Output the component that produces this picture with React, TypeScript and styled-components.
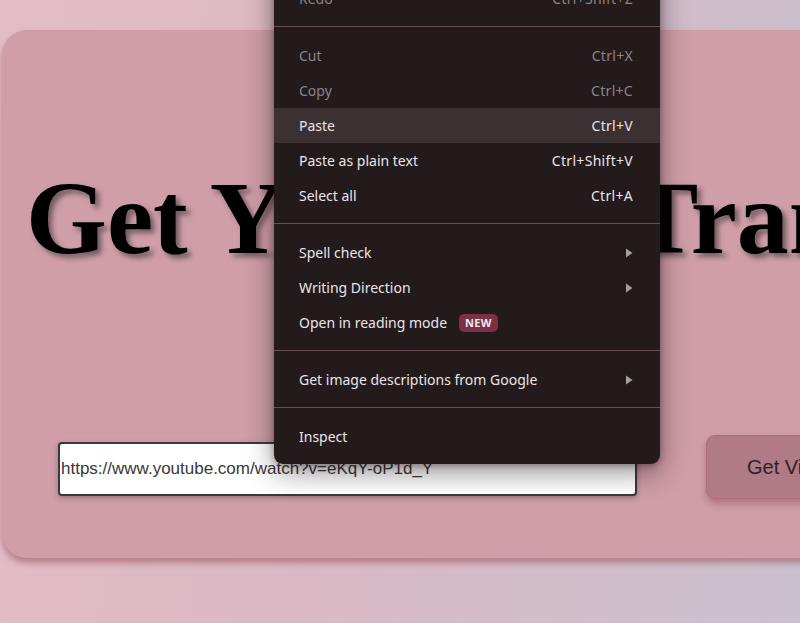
import React from 'react';
import styled, { createGlobalStyle } from 'styled-components';

const GlobalStyle = createGlobalStyle`
  html, body {
    margin: 0;
    padding: 0;
    overflow: hidden;
  }
  body {
    font-family: 'Liberation Sans', Arial, sans-serif;
  }
`;

const Page = styled.div`
  position: relative;
  width: 800px;
  height: 623px;
  overflow: hidden;
  background: linear-gradient(100deg, #e3bcc6 0%, #dab9c4 45%, #c9c1cd 100%);
  padding: 30px 0 0 2px;
  box-sizing: border-box;
`;

const Card = styled.div`
  width: 1100px;
  height: 528px;
  box-sizing: border-box;
  background: #cf9ea8;
  border-radius: 25px;
  box-shadow: 0 5px 6px rgba(165, 95, 110, 0.65);
  padding: 0 0 0 24px;
  display: flex;
  flex-direction: column;
`;

const Title = styled.h1`
  margin: 128px 0 0;
  font-family: 'Liberation Serif', 'Times New Roman', serif;
  font-weight: 700;
  font-size: 104px;
  line-height: normal;
  color: #000;
  white-space: nowrap;
  text-shadow: 4px 4px 5px rgba(40, 40, 40, 0.55);
`;

const FormRow = styled.div`
  display: flex;
  align-items: flex-start;
  gap: 69px;
  margin-top: 158px;
  padding-left: 32px;
`;

const UrlInput = styled.input`
  width: 579px;
  height: 54px;
  margin-top: 7px;
  box-sizing: border-box;
  border: 2px solid #3a3a3a;
  border-radius: 4px;
  padding: 0 0 0 1px;
  background: #fff;
  font-family: 'Liberation Sans', Arial, sans-serif;
  font-size: 17px;
  color: #383838;
  box-shadow: 0 2px 5px rgba(60, 30, 35, 0.35);
  outline: none;
`;

const SubmitButton = styled.button`
  height: 64px;
  box-sizing: border-box;
  padding: 0 40px;
  background: #b07a86;
  border: 1px solid #b8677a;
  border-radius: 9px;
  font-family: 'Liberation Sans', Arial, sans-serif;
  font-size: 20px;
  color: #2b2426;
  white-space: nowrap;
  box-shadow: 0 5px 7px rgba(110, 50, 65, 0.35);
`;

const Menu = styled.div`
  position: absolute;
  left: 274px;
  top: -62px;
  width: 386px;
  box-sizing: border-box;
  padding: 8px 0 10px;
  background: #231a1c;
  border-radius: 0 0 9px 9px;
  box-shadow: 0 8px 28px rgba(20, 5, 10, 0.45), 0 2px 6px rgba(20, 5, 10, 0.3);
  font-family: 'Noto Sans', 'Segoe UI', sans-serif;
  font-size: 14px;
`;

const Item = styled.div<{ $disabled?: boolean; $active?: boolean }>`
  display: flex;
  align-items: center;
  height: 35px;
  padding: 0 27px 0 25px;
  color: ${(p) => (p.$disabled ? '#8b8587' : '#ebe4e6')};
  background: ${(p) => (p.$active ? '#3b3133' : 'transparent')};
`;

const Label = styled.span`
  flex: 1;
  display: flex;
  align-items: center;
  gap: 12px;
`;

const Shortcut = styled.span`
  color: inherit;
  letter-spacing: 0.3px;
`;

const Separator = styled.div`
  height: 1px;
  margin: 10px 0 11px;
  background: #6b4e55;
`;

const Badge = styled.span`
  display: inline-block;
  padding: 1px 6px;
  border-radius: 5px;
  background: #7c3045;
  color: #f5e8ec;
  font-size: 11px;
  font-weight: 700;
  letter-spacing: 0.3px;
  line-height: 16px;
`;

const Arrow = () => (
  <svg width="8" height="10" viewBox="0 0 8 10">
    <path d="M1 0.5 L7.5 5 L1 9.5 Z" fill="#a59ea0" />
  </svg>
);

export default function App() {
  return (
    <>
      <GlobalStyle />
      <Page>
        <Card>
          <Title>Get YouTube Transcript</Title>
          <FormRow>
            <UrlInput defaultValue="https://www.youtube.com/watch?v=eKqY-oP1d_Y" />
            <SubmitButton>Get Video Transcript</SubmitButton>
          </FormRow>
        </Card>
        <Menu>
          <Item $disabled>
            <Label>Undo</Label>
            <Shortcut>Ctrl+Z</Shortcut>
          </Item>
          <Item $disabled>
            <Label>Redo</Label>
            <Shortcut>Ctrl+Shift+Z</Shortcut>
          </Item>
          <Separator />
          <Item $disabled>
            <Label>Cut</Label>
            <Shortcut>Ctrl+X</Shortcut>
          </Item>
          <Item $disabled>
            <Label>Copy</Label>
            <Shortcut>Ctrl+C</Shortcut>
          </Item>
          <Item $active>
            <Label>Paste</Label>
            <Shortcut>Ctrl+V</Shortcut>
          </Item>
          <Item>
            <Label>Paste as plain text</Label>
            <Shortcut>Ctrl+Shift+V</Shortcut>
          </Item>
          <Item>
            <Label>Select all</Label>
            <Shortcut>Ctrl+A</Shortcut>
          </Item>
          <Separator />
          <Item>
            <Label>Spell check</Label>
            <Arrow />
          </Item>
          <Item>
            <Label>Writing Direction</Label>
            <Arrow />
          </Item>
          <Item>
            <Label>
              Open in reading mode <Badge>NEW</Badge>
            </Label>
          </Item>
          <Separator />
          <Item>
            <Label>Get image descriptions from Google</Label>
            <Arrow />
          </Item>
          <Separator />
          <Item>
            <Label>Inspect</Label>
          </Item>
        </Menu>
      </Page>
    </>
  );
}
